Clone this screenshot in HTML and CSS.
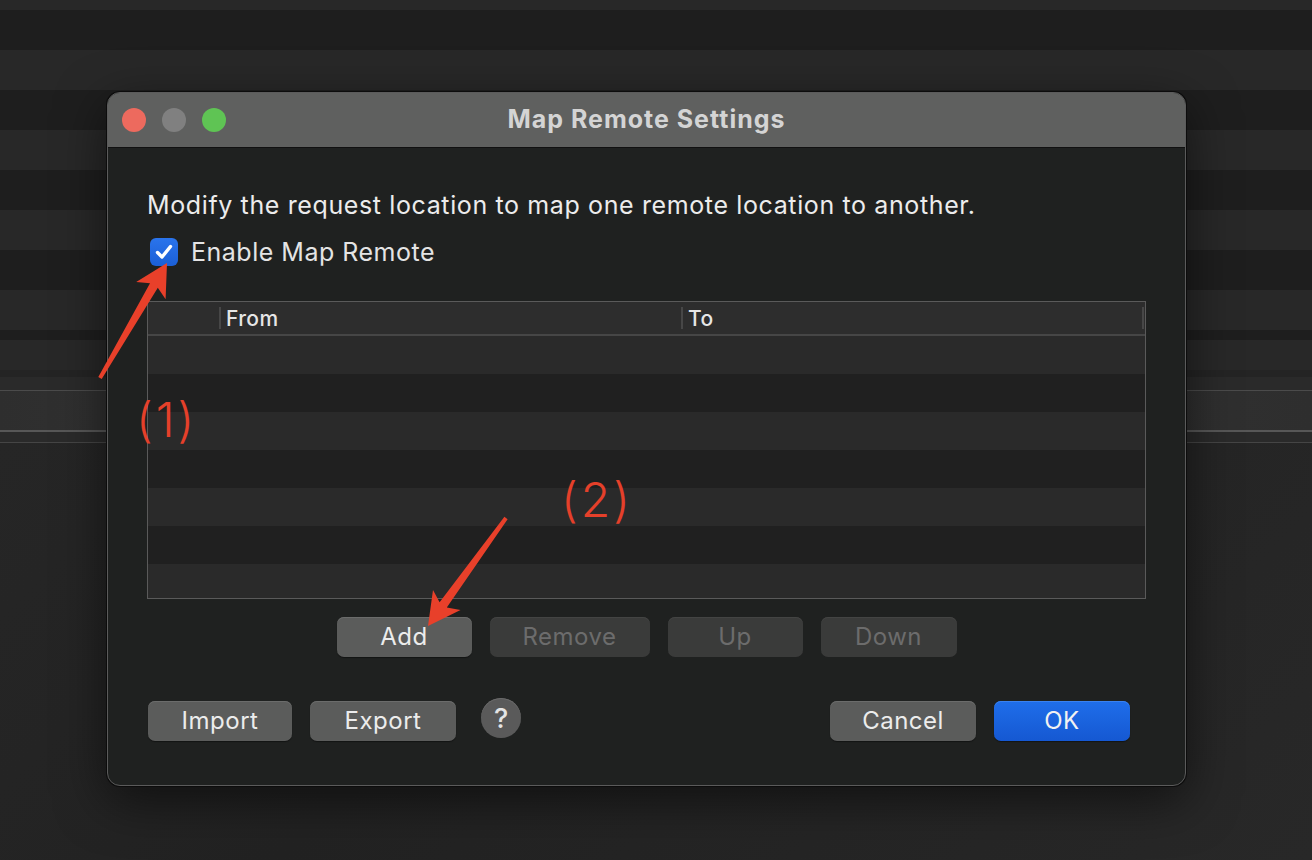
FILE: index.html
```html
<!DOCTYPE html>
<html>
<head>
<meta charset="utf-8">
<link rel="stylesheet" href="styles.css">
</head>
<body>
<div class="screen">
  <div class="bg-stripes"></div>
  <div class="band">
    <div class="band-a"></div>
    <div class="band-b"></div>
    <div class="band-line1"></div>
    <div class="band-panel"></div>
    <div class="band-line2"></div>
    <div class="band-c"></div>
    <div class="band-line3"></div>
  </div>
  <div class="bg-rest"></div>

  <div class="dialog">
    <div class="titlebar">
      <div class="lights">
        <span class="light red"></span>
        <span class="light gray"></span>
        <span class="light green"></span>
      </div>
      <div class="title">Map Remote Settings</div>
      <div></div>
    </div>
    <div class="body">
      <p class="intro">Modify the request location to map one remote location to another.</p>
      <label class="check-row">
        <span class="checkbox">
          <svg viewBox="0 0 28 28" width="28" height="28"><path d="M7.5 14.5 L12 19 L20.5 8.5" fill="none" stroke="#fff" stroke-width="3.4" stroke-linecap="round" stroke-linejoin="round"/></svg>
        </span>
        <span class="check-label">Enable Map Remote</span>
      </label>
      <div class="table">
        <div class="thead">
          <div class="th th-first"></div>
          <div class="th th-from"><span class="sep"></span>From</div>
          <div class="th th-to"><span class="sep"></span>To</div>
          <div class="th th-end"><span class="sep"></span></div>
        </div>
        <div class="tbody">
          <div class="row light-row"></div>
          <div class="row dark-row"></div>
          <div class="row light-row"></div>
          <div class="row dark-row"></div>
          <div class="row light-row"></div>
          <div class="row dark-row"></div>
          <div class="row light-row"></div>
        </div>
      </div>
      <div class="actions">
        <button class="btn w-add">Add</button>
        <button class="btn disabled w-remove">Remove</button>
        <button class="btn disabled w-up">Up</button>
        <button class="btn disabled w-down">Down</button>
      </div>
      <div class="footer">
        <div class="footer-left">
          <button class="btn w-import">Import</button>
          <button class="btn w-export">Export</button>
          <button class="help">?</button>
        </div>
        <div class="footer-right">
          <button class="btn w-cancel">Cancel</button>
          <button class="btn primary w-ok">OK</button>
        </div>
      </div>
    </div>
  </div>

  <svg class="annot" width="1312" height="860" viewBox="0 0 1312 860">
    <polygon fill="#e8402a" points="167,263 165.6,299.2 157.8,287.8 101.7,379 98.3,377 150,283.2 136.2,282"/>
    <polygon fill="#e8402a" points="428,626 460.5,610 446.8,607.5 507.6,519.2 504.4,516.8 439.6,602.3 433,590.1"/>
  </svg>
  <span class="mark mark-1">(1)</span>
  <span class="mark mark-2">(2)</span>
</div>
</body>
</html>
```

FILE: styles.css
```css
* { box-sizing: border-box; }
html, body { margin: 0; padding: 0; background: #1e1e1e; }
body { font-family: Inter, "Noto Sans", "Liberation Sans", sans-serif; }

.screen {
  position: relative;
  width: 1312px;
  height: 860px;
  overflow: hidden;
  display: flex;
  flex-direction: column;
}

.bg-stripes {
  height: 370px;
  flex: none;
  background: repeating-linear-gradient(#282828 0 40px, #1e1e1e 40px 80px);
  background-position: 0 -30px;
}
.band { display: flex; flex-direction: column; flex: none; }
.band-a { height: 7px; background: #242424; }
.band-b { height: 13px; background: #2a2a2a; }
.band-line1 { height: 1px; background: #4b4b4b; }
.band-panel { height: 39px; background: linear-gradient(90deg, #2e2e2e, #363636 30%, #333 70%, #2e2e2e); }
.band-line2 { height: 2px; background: #575757; }
.band-c { height: 10px; background: #2a2a2a; }
.band-line3 { height: 1px; background: #454545; }
.bg-rest { flex: 1; background: linear-gradient(135deg, #262626, #222 40%, #282828); }

.dialog {
  position: absolute;
  left: 107px;
  top: 92px;
  width: 1079px;
  height: 694px;
  border-radius: 13px;
  border: 1px solid #5b5b5b;
  background: #1f2120;
  box-shadow: 0 0 0 1px #0c0c0c, 0 14px 50px rgba(0,0,0,0.55);
  overflow: hidden;
  display: flex;
  flex-direction: column;
}

.titlebar {
  height: 55px;
  flex: none;
  background: #5f605f;
  border-bottom: 1px solid #111;
  display: grid;
  grid-template-columns: 1fr auto 1fr;
  align-items: center;
  padding-left: 14px;
}
.lights { display: flex; gap: 16px; }
.light { width: 24px; height: 24px; border-radius: 50%; display: block; }
.light.red { background: #ed6a5e; }
.light.gray { background: #808080; }
.light.green { background: #5fc454; }
.title {
  font-weight: 700;
  font-size: 25px;
  color: #d4d4d4;
  letter-spacing: 1px;
  margin-left: -14px;
  margin-top: -2px;
}

.body {
  flex: 1;
  padding: 42px 39px 0 39px;
  display: flex;
  flex-direction: column;
}

.intro {
  margin: 0;
  font-size: 25px;
  line-height: 30px;
  color: #ececec;
  letter-spacing: 0.62px;
}

.check-row {
  margin-top: 18px;
  height: 28px;
  display: flex;
  align-items: center;
  padding-left: 3px;
  gap: 13px;
}
.checkbox {
  width: 28px;
  height: 28px;
  border-radius: 6px;
  background: linear-gradient(#2a74ec, #1b5fd6);
  display: block;
}
.checkbox svg { display: block; }
.check-label { font-size: 25px; color: #e4e4e4; letter-spacing: 0.5px; }

.table {
  margin-top: 35px;
  height: 298px;
  border: 1px solid #5a5a5a;
  display: flex;
  flex-direction: column;
  overflow: hidden;
}
.thead {
  height: 34px;
  flex: none;
  background: #2d2d2d;
  border-bottom: 2px solid #464646;
  display: flex;
}
.th {
  display: flex;
  align-items: center;
  font-size: 21px;
  font-weight: 500;
  color: #e6e6e6;
  letter-spacing: 0.4px;
  gap: 5px;
}
.th-first { width: 71px; }
.th-from { width: 462px; }
.th-to { flex: 1; }
.th-end { width: 3px; }
.sep { width: 2px; height: 22px; background: #474747; display: block; }

.tbody { flex: 1; display: flex; flex-direction: column; }
.row { height: 38px; flex: none; }
.light-row { background: #2a2a2a; }
.dark-row { background: #202020; }

.btn {
  font-family: inherit;
  font-size: 24px;
  letter-spacing: 0.5px;
  height: 40px;
  border: none;
  border-radius: 7px;
  background: #5b5c5b;
  color: #ececec;
  box-shadow: inset 0 1px 0 #6b6c6b, 0 1px 1px rgba(0,0,0,0.4);
  padding: 0;
  line-height: 40px;
}
.btn.disabled {
  background: #3a3b3a;
  color: #6c6c6c;
  box-shadow: inset 0 1px 0 #434443;
}
.btn.primary {
  background: linear-gradient(#1f6eea, #1558d2);
  color: #f2f2f2;
  box-shadow: inset 0 1px 0 #3a82f0, 0 1px 1px rgba(0,0,0,0.4);
}

.actions {
  margin-top: 18px;
  display: flex;
  justify-content: center;
  gap: 18px;
}
.w-add { width: 135px; }
.w-remove { width: 160px; }
.w-up { width: 135px; }
.w-down { width: 136px; }

.footer {
  margin-top: 44px;
  display: flex;
  justify-content: space-between;
  padding-left: 1px;
  padding-right: 16px;
}
.footer-left, .footer-right { display: flex; gap: 18px; align-items: center; }
.w-import { width: 144px; }
.w-export { width: 146px; }
.w-cancel { width: 146px; }
.w-ok { width: 136px; }
.help {
  margin-left: 7px;
  width: 40px;
  height: 40px;
  border-radius: 50%;
  border: none;
  background: #5a5a5a;
  color: #e4e4e4;
  font-family: inherit;
  font-size: 27px;
  font-weight: 500;
  padding: 0;
  margin-top: -6px;
  box-shadow: inset 0 1px 0 #6a6a6a;
}

.annot { position: absolute; left: 0; top: 0; pointer-events: none; }
.mark {
  position: absolute;
  font-size: 48px;
  font-weight: 300;
  color: #e5402a;
  line-height: 1;
  letter-spacing: 3px;
}
.mark-1 { left: 136px; top: 396px; }
.mark-2 { left: 561px; top: 476px; }
```
